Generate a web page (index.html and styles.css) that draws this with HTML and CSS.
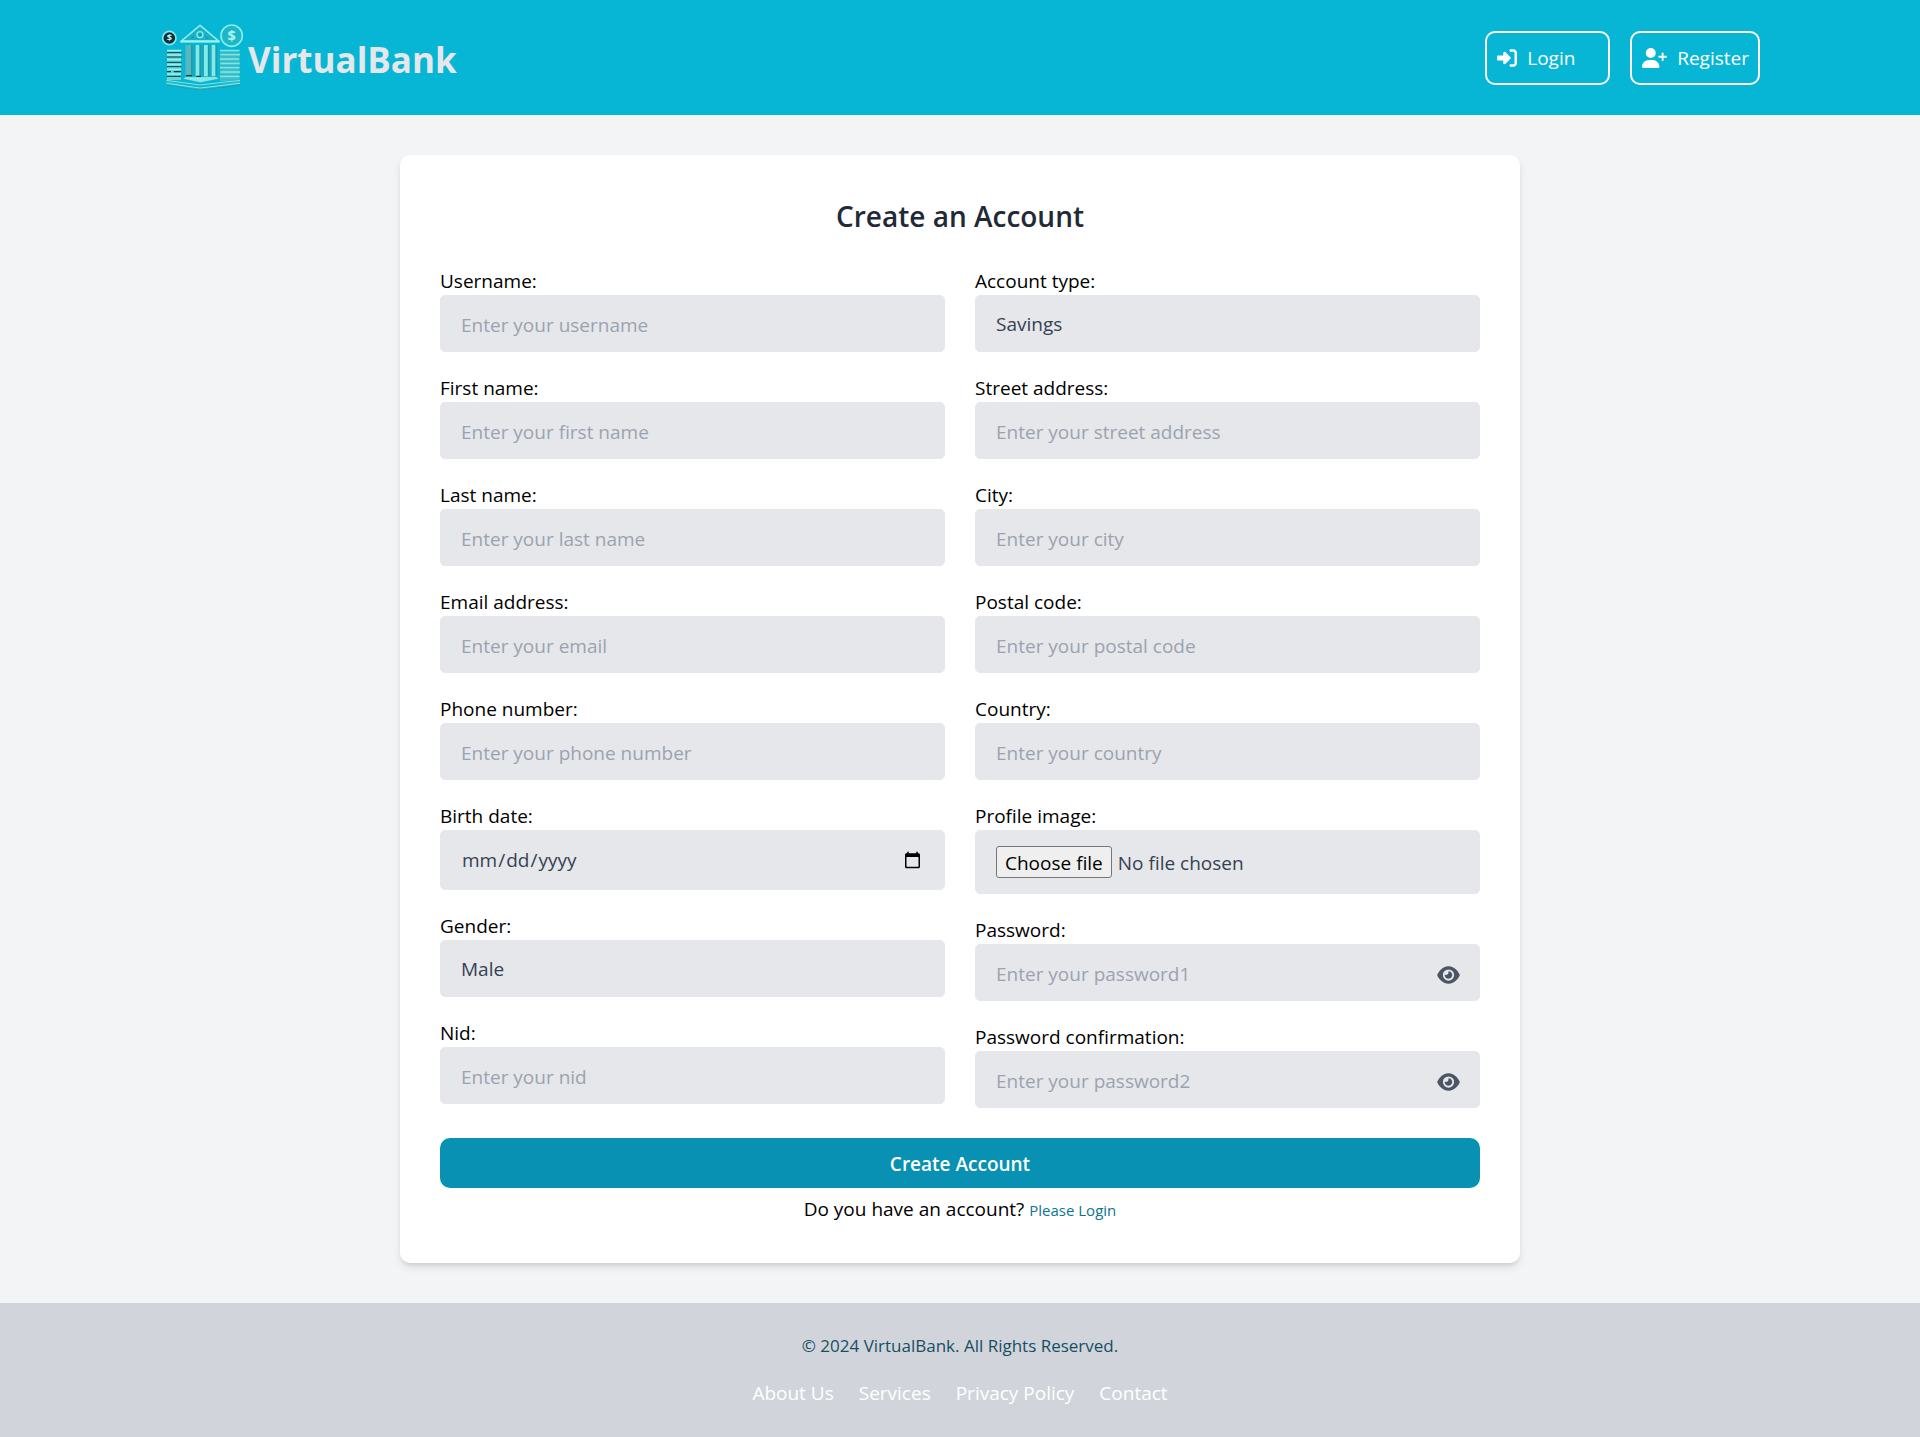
FILE: index.html
```html
<!DOCTYPE html>
<html lang="en">
<head>
  <meta charset="utf-8">
  <meta name="viewport" content="width=device-width, initial-scale=1">
  <title>VirtualBank - Create an Account</title>
  <link rel="stylesheet" href="styles.css">
</head>
<body>
  <header class="site-header">
    <div class="container header-row">
      <a class="brand" href="#">
        <svg class="brand-logo" viewBox="15 13 255 225" aria-hidden="true">
          <!-- plinth -->
          <path d="M34 194l101 26 120-26v11l-120 20-101-20z" fill="#38b9c6"/>
          <path d="M34 194l101 14 120-14M34 203l101 14 120-14" fill="none" stroke="#7be9e8" stroke-width="3"/>
          <path d="M36 208l99 15 119-15" fill="none" stroke="#2390a0" stroke-width="2"/>
          <path d="M84 190l52 11 56-11-8-7H92z" fill="#7fece8" stroke="#2ba5b3" stroke-width="2"/>
          <!-- left stack -->
          <path d="M36 103h42v90H36z" fill="#62d8db"/>
          <path d="M36 111h43M36 124h43M36 140h43M36 153h43M36 182h42" stroke="#10363f" stroke-width="3"/>
          <path d="M36 168h12M56 168h22" stroke="#10363f" stroke-width="4"/>
          <path d="M36 104h43M36 118h43M36 132h43M36 147h43M36 161h43M36 175h42" stroke="#8cf2ee" stroke-width="4"/>
          <!-- right stack -->
          <path d="M195 103h59v90l-59 3z" fill="#45c9d2"/>
          <path d="M195 104h58M197 117h58M195 130h57M197 143h57M195 156h58M197 169h58M195 182h58" stroke="#7de6e4" stroke-width="4"/>
          <path d="M195 111h60M195 124h60M195 137h60M195 150h60M195 163h60M195 176h60M197 190h58" stroke="#2fa0b0" stroke-width="2"/>
          <!-- columns -->
          <path d="M90 88h98v94H90z" fill="#18a9be"/>
          <path d="M91 88h19v94H91z" fill="#55b9c4"/>
          <path d="M122 88h12v94h-12zM147 88h12v94h-12zM170 88h12v94h-12z" fill="#80ece9"/>
          <path d="M110 88v94M135 88v94M160 88v94M183 88v94" stroke="#2393a2" stroke-width="3"/>
          <path d="M93 180h18M124 182h14" stroke="#123c48" stroke-width="4"/>
          <!-- pediment -->
          <path d="M77 78l58-49 58 49z" fill="#1ab0c5" stroke="#84efeb" stroke-width="5" stroke-linejoin="round"/>
          <path d="M78 77h114" stroke="#9af5f0" stroke-width="6"/>
          <circle cx="135" cy="57" r="9" fill="none" stroke="#83ede9" stroke-width="4"/>
          <path d="M131 57h8M110 68l7-6M152 63l6 5" stroke="#21818e" stroke-width="3"/>
          <!-- coins -->
          <circle cx="43" cy="67" r="20" fill="#112e3b" stroke="#80e9e6" stroke-width="5"/>
          <text class="coin-sign" x="43" y="77" font-size="28" fill="#bdf8f3">$</text>
          <circle cx="230" cy="60" r="32" fill="#21b6c7" stroke="#83efeb" stroke-width="5"/>
          <text class="coin-sign" x="230" y="76" font-size="44" fill="#a7f7f2">$</text>
        </svg>
        <span class="brand-name">VirtualBank</span>
      </a>
      <nav class="header-nav" aria-label="Account">
        <a class="nav-button nav-login" href="#">
          <svg class="icon-login" viewBox="0 0 512 512" aria-hidden="true"><path fill="currentColor" d="M217.9 105.9L340.7 228.7c7.2 7.2 11.3 17.1 11.3 27.3s-4.1 20.1-11.3 27.3L217.9 406.1c-6.4 6.4-15 9.9-24 9.9c-18.7 0-33.9-15.2-33.9-33.9l0-62.1L32 320c-17.7 0-32-14.3-32-32l0-64c0-17.7 14.3-32 32-32l128 0 0-62.1c0-18.7 15.2-33.9 33.9-33.9c9 0 17.6 3.6 24 9.9zM352 416l64 0c17.7 0 32-14.3 32-32l0-256c0-17.7-14.3-32-32-32l-64 0c-17.7 0-32-14.3-32-32s14.3-32 32-32l64 0c53 0 96 43 96 96l0 256c0 53-43 96-96 96l-64 0c-17.7 0-32-14.3-32-32s14.3-32 32-32z"/></svg>
          Login
        </a>
        <a class="nav-button nav-register" href="#">
          <svg class="icon-register" viewBox="0 0 640 512" aria-hidden="true"><path fill="currentColor" d="M96 128a128 128 0 1 1 256 0A128 128 0 1 1 96 128zM0 482.3C0 383.8 79.8 304 178.3 304l91.4 0C368.2 304 448 383.8 448 482.3c0 16.4-13.3 29.7-29.7 29.7L29.7 512C13.3 512 0 498.7 0 482.3zM504 312l0-64-64 0c-13.3 0-24-10.7-24-24s10.7-24 24-24l64 0 0-64c0-13.3 10.7-24 24-24s24 10.7 24 24l0 64 64 0c13.3 0 24 10.7 24 24s-10.7 24-24 24l-64 0 0 64c0 13.3-10.7 24-24 24s-24-10.7-24-24z"/></svg>
          Register
        </a>
      </nav>
    </div>
  </header>

  <main class="page">
    <section class="card">
      <h1 class="card-title">Create an Account</h1>
      <form>
        <div class="form-columns">
          <div class="form-column">
            <div class="field">
              <label for="username">Username:</label>
              <input class="control" id="username" type="text" placeholder="Enter your username">
            </div>
            <div class="field">
              <label for="first-name">First name:</label>
              <input class="control" id="first-name" type="text" placeholder="Enter your first name">
            </div>
            <div class="field">
              <label for="last-name">Last name:</label>
              <input class="control" id="last-name" type="text" placeholder="Enter your last name">
            </div>
            <div class="field">
              <label for="email">Email address:</label>
              <input class="control" id="email" type="email" placeholder="Enter your email">
            </div>
            <div class="field">
              <label for="phone">Phone number:</label>
              <input class="control" id="phone" type="text" placeholder="Enter your phone number">
            </div>
            <div class="field">
              <label for="birth-date">Birth date:</label>
              <input class="control control-date" id="birth-date" type="date">
            </div>
            <div class="field">
              <label for="gender">Gender:</label>
              <select class="control" id="gender">
                <option>Male</option>
                <option>Female</option>
              </select>
            </div>
            <div class="field">
              <label for="nid">Nid:</label>
              <input class="control" id="nid" type="text" placeholder="Enter your nid">
            </div>
          </div>
          <div class="form-column">
            <div class="field">
              <label for="account-type">Account type:</label>
              <select class="control" id="account-type">
                <option>Savings</option>
                <option>Current</option>
              </select>
            </div>
            <div class="field">
              <label for="street">Street address:</label>
              <input class="control" id="street" type="text" placeholder="Enter your street address">
            </div>
            <div class="field">
              <label for="city">City:</label>
              <input class="control" id="city" type="text" placeholder="Enter your city">
            </div>
            <div class="field">
              <label for="postal">Postal code:</label>
              <input class="control" id="postal" type="text" placeholder="Enter your postal code">
            </div>
            <div class="field">
              <label for="country">Country:</label>
              <input class="control" id="country" type="text" placeholder="Enter your country">
            </div>
            <div class="field">
              <label for="profile-image">Profile image:</label>
              <div class="control control-file">
                <span class="file-button">Choose file</span>
                <span class="file-name">No file chosen</span>
                <input class="file-input" id="profile-image" type="file">
              </div>
            </div>
            <div class="field">
              <label for="password1">Password:</label>
              <div class="password-wrap">
                <input class="control" id="password1" type="password" placeholder="Enter your password1">
                <button class="eye-button" type="button" aria-label="Show password">
                  <svg class="icon-eye" viewBox="0 0 576 512" aria-hidden="true"><path fill="currentColor" d="M288 32c-80.8 0-145.5 36.8-192.6 80.6C48.6 156 17.3 208 2.5 243.7c-3.3 7.9-3.3 16.7 0 24.6C17.3 304 48.6 356 95.4 399.4C142.5 443.2 207.2 480 288 480s145.5-36.8 192.6-80.6c46.8-43.5 78.1-95.4 93-131.1c3.3-7.9 3.3-16.7 0-24.6c-14.9-35.7-46.2-87.7-93-131.1C433.5 68.8 368.8 32 288 32zM144 256a144 144 0 1 1 288 0 144 144 0 1 1 -288 0zm144-64c0 35.3-28.7 64-64 64c-7.1 0-13.9-1.2-20.3-3.3c-5.5-1.8-11.9 1.6-11.7 7.4c.3 6.9 1.3 13.8 3.2 20.7c13.7 51.2 66.4 81.6 117.6 67.9s81.6-66.4 67.9-117.6c-11.1-41.5-47.8-69.4-88.6-71.1c-5.8-.2-9.2 6.1-7.4 11.7c2.1 6.4 3.3 13.2 3.3 20.3z"/></svg>
                </button>
              </div>
            </div>
            <div class="field">
              <label for="password2">Password confirmation:</label>
              <div class="password-wrap">
                <input class="control" id="password2" type="password" placeholder="Enter your password2">
                <button class="eye-button" type="button" aria-label="Show password confirmation">
                  <svg class="icon-eye" viewBox="0 0 576 512" aria-hidden="true"><path fill="currentColor" d="M288 32c-80.8 0-145.5 36.8-192.6 80.6C48.6 156 17.3 208 2.5 243.7c-3.3 7.9-3.3 16.7 0 24.6C17.3 304 48.6 356 95.4 399.4C142.5 443.2 207.2 480 288 480s145.5-36.8 192.6-80.6c46.8-43.5 78.1-95.4 93-131.1c3.3-7.9 3.3-16.7 0-24.6c-14.9-35.7-46.2-87.7-93-131.1C433.5 68.8 368.8 32 288 32zM144 256a144 144 0 1 1 288 0 144 144 0 1 1 -288 0zm144-64c0 35.3-28.7 64-64 64c-7.1 0-13.9-1.2-20.3-3.3c-5.5-1.8-11.9 1.6-11.7 7.4c.3 6.9 1.3 13.8 3.2 20.7c13.7 51.2 66.4 81.6 117.6 67.9s81.6-66.4 67.9-117.6c-11.1-41.5-47.8-69.4-88.6-71.1c-5.8-.2-9.2 6.1-7.4 11.7c2.1 6.4 3.3 13.2 3.3 20.3z"/></svg>
                </button>
              </div>
            </div>
          </div>
        </div>
        <button class="submit" type="submit">Create Account</button>
      </form>
      <p class="login-hint">Do you have an account? <a class="login-link" href="#">Please Login</a></p>
    </section>
  </main>

  <footer class="site-footer">
    <p class="copyright">© 2024 VirtualBank. All Rights Reserved.</p>
    <nav class="footer-nav" aria-label="Footer">
      <a href="#">About Us</a>
      <a href="#">Services</a>
      <a href="#">Privacy Policy</a>
      <a href="#">Contact</a>
    </nav>
  </footer>
</body>
</html>
```
FILE: styles.css
```css
*,
*::before,
*::after {
  box-sizing: border-box;
}

body {
  margin: 0;
  background: #f3f4f6;
  color: #000;
  font-family: "Segoe UI", "Open Sans", "Noto Sans", sans-serif;
  font-size: 19px;
  line-height: 30px;
}

a {
  text-decoration: none;
}

.container {
  width: 100%;
  max-width: 1600px;
  margin: 0 auto;
}

/* Header */
.site-header {
  background: #06b6d4;
  padding: 20px;
}

.header-row {
  display: flex;
  align-items: center;
  justify-content: space-between;
}

.brand {
  display: flex;
  align-items: center;
  gap: 3px;
  color: #e5e7eb;
}

.brand-logo {
  display: block;
  width: 85px;
  height: 75px;
}

.coin-sign {
  font-weight: 700;
  text-anchor: middle;
}

.brand-name {
  padding-top: 4px;
  font-size: 35px;
  font-weight: 700;
  line-height: 45px;
}

.header-nav {
  display: flex;
  gap: 20px;
}

.nav-button {
  display: flex;
  align-items: center;
  gap: 10px;
  border: 2px solid #fff;
  border-radius: 10px;
  padding: 10px 9px 10px 10px;
  color: #fff;
}

.nav-login {
  min-width: 125px;
}

.icon-login {
  width: 20px;
  height: 20px;
}

.icon-register {
  width: 25px;
  height: 20px;
}

/* Registration card */
.page {
  padding: 40px 20px;
}

.card {
  max-width: 1120px;
  margin: 0 auto;
  padding: 40px;
  background: #fff;
  border-radius: 10px;
  box-shadow: 0 5px 8px -1px rgba(0, 0, 0, 0.1), 0 3px 5px -2px rgba(0, 0, 0, 0.1);
}

.card-title {
  margin: 0 0 30px;
  padding-top: 2px;
  color: #1f2937;
  font-size: 28px;
  font-weight: 600;
  line-height: 38px;
  text-align: center;
}

.form-columns {
  display: grid;
  grid-template-columns: 1fr 1fr;
  gap: 30px;
}

.form-column {
  display: flex;
  flex-direction: column;
  gap: 20px;
}

.field label {
  display: block;
  padding-top: 2px;
  line-height: 28px;
}

.control {
  display: block;
  width: 100%;
  margin: 0;
  padding: 16px 20px 14px;
  border: 1px solid #e5e7eb;
  border-radius: 5px;
  background: #e5e7eb;
  color: #374151;
  font: inherit;
  line-height: 25px;
  appearance: none;
}

input.control,
select.control {
  height: 57px;
}

.control::placeholder {
  color: #9ca3af;
  opacity: 1;
}

input.control-date {
  height: 60px;
  padding: 15px 20px;
}

.control-file {
  position: relative;
  display: flex;
  align-items: center;
  gap: 6px;
  padding: 15px 20px;
}

.file-button {
  padding: 2px 8px 0;
  border: 1px solid #767676;
  border-radius: 3px;
  background: #efefef;
  color: #000;
  line-height: 28px;
}

.file-name {
  padding-top: 2px;
}

.file-input {
  position: absolute;
  inset: 0;
  width: 100%;
  opacity: 0;
}

.password-wrap {
  position: relative;
}

.eye-button {
  position: absolute;
  top: 0;
  right: 0;
  bottom: 0;
  display: flex;
  align-items: center;
  padding: 4px 20px 0;
  border: 0;
  background: none;
  color: #4b5563;
}

.icon-eye {
  width: 23px;
  height: 20px;
}

.submit {
  display: block;
  width: 100%;
  margin-top: 30px;
  padding: 12px 10px 10px;
  border: 0;
  border-radius: 10px;
  background: #0891b2;
  color: #fff;
  font: inherit;
  font-weight: 600;
  line-height: 28px;
}

.login-hint {
  margin: 5px 0 0;
  padding-top: 2px;
  line-height: 28px;
  text-align: center;
}

.login-link {
  color: #0e7490;
  font-size: 15px;
  line-height: 20px;
}

/* Footer */
.site-footer {
  display: flex;
  flex-direction: column;
  align-items: center;
  gap: 20px;
  padding: 30px 20px;
  background: #d1d5db;
}

.copyright {
  margin: 0;
  color: #164e63;
  font-size: 17px;
  line-height: 25px;
}

.footer-nav {
  display: flex;
  gap: 25px;
}

.footer-nav a {
  color: #fff;
}
```
